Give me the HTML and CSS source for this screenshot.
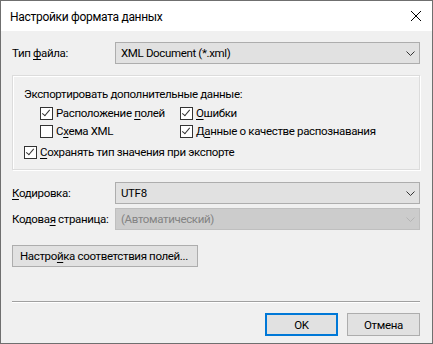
FILE: index.html
```html
<!DOCTYPE html>
<html lang="ru">
<head>
<meta charset="utf-8">
<title>Настройки формата данных</title>
<link rel="stylesheet" href="styles.css">
</head>
<body>
<div class="window">
  <div class="titlebar">
    <span class="title">Настройки формата данных</span>
    <svg class="close" width="12" height="12" viewBox="0 0 12 12"><path d="M1 1 L11 11 M11 1 L1 11" stroke="#000" stroke-width="1" fill="none"/></svg>
  </div>
  <div class="content">
    <div class="field">
      <span class="label">Тип <u>ф</u>айла:</span>
      <div class="select"><span>XML Document (*.xml)</span><svg class="chev" width="9" height="5" viewBox="0 0 9 5"><path d="M0.5 0.5 L4.5 4.5 L8.5 0.5" stroke="#333" fill="none"/></svg></div>
    </div>
    <div class="group">
      <div class="group-title">Экспортировать дополнительные данные:</div>
      <div class="grid">
        <label class="check"><span class="box on"></span><span>Расположение <u>п</u>олей</span></label>
        <label class="check"><span class="box on"></span><span><u>О</u>шибки</span></label>
        <label class="check"><span class="box"></span><span>С<u>х</u>ема XML</span></label>
        <label class="check"><span class="box on"></span><span>Д<u>а</u>нные о качестве распознавания</span></label>
      </div>
      <label class="check keep"><span class="box on"></span><span><u>С</u>охранять тип значения при экспорте</span></label>
    </div>
    <div class="field enc">
      <span class="label"><u>К</u>одировка:</span>
      <div class="select"><span>UTF8</span><svg class="chev" width="9" height="5" viewBox="0 0 9 5"><path d="M0.5 0.5 L4.5 4.5 L8.5 0.5" stroke="#333" fill="none"/></svg></div>
    </div>
    <div class="field page">
      <span class="label">Кодова<u>я</u> страница:</span>
      <div class="select disabled"><span>(Автоматический)</span><svg class="chev" width="9" height="5" viewBox="0 0 9 5"><path d="M0.5 0.5 L4.5 4.5 L8.5 0.5" stroke="#b4b4b4" fill="none"/></svg></div>
    </div>
    <div class="mapping"><button class="btn wide">Настро<u>й</u>ка соответствия полей...</button></div>
    <div class="sep"></div>
    <div class="actions">
      <button class="btn default">OK</button>
      <button class="btn">Отмена</button>
    </div>
  </div>
</div>
</body>
</html>
```
FILE: styles.css
```css
* { box-sizing: border-box; }
html, body { margin: 0; padding: 0; background: #f0f0f0; }
body { font-family: Roboto, "Noto Sans", sans-serif; font-size: 11.5px; letter-spacing: -0.35px; color: #000; white-space: nowrap; }
u { text-decoration: underline; text-underline-offset: 2px; }
.window { width: 433px; height: 344px; border: 1px solid #6f6f6f; background: #f0f0f0; display: flex; flex-direction: column; }
.titlebar { height: 30px; flex: none; background: #fff; display: flex; align-items: center; justify-content: space-between; padding: 0 10px 0 9px; }
.title { font-size: 12px; letter-spacing: -0.3px; position: relative; top: 1px; }
.close { display: block; }
.content { padding: 11px 12px 0 11px; display: flex; flex-direction: column; flex: 1; }
.field { display: flex; align-items: center; height: 22px; }
.label { width: 103px; flex: none; }
.select { flex: 1; height: 22px; background: #e1e1e1; border: 1px solid #adadad; display: flex; align-items: center; justify-content: space-between; padding: 0 4px 0 5px; }
.select.disabled { background: #cccccc; border-color: #bfbfbf; color: #838383; }
.chev { display: block; }
.group { margin-top: 11px; height: 95px; border: 1px solid #dcdcdc; box-shadow: inset 1px 1px 0 #fff, 1px 1px 0 #fff; padding: 10px 0 0 11px; }
.group-title { line-height: 16px; }
.grid { display: grid; grid-template-columns: 140px auto; row-gap: 2px; margin: 3px 0 0 16px; }
.check { display: flex; align-items: center; height: 16px; gap: 3px; }
.box { width: 13px; height: 13px; border: 1px solid #333; background: #fff; flex: none; position: relative; }
.box.on::after { content: ""; position: absolute; left: 3px; top: 0px; width: 3px; height: 7px; border-right: 1.2px solid #333; border-bottom: 1.2px solid #333; transform: rotate(40deg); }
.keep { margin-top: 5px; }
.enc { margin-top: 12px; }
.page { margin-top: 4px; }
.mapping { margin-top: 15px; }
.btn { font-family: inherit; font-size: 11.5px; letter-spacing: -0.35px; color: #000; background: #e1e1e1; border: 1px solid #adadad; height: 22px; padding: 0; margin: 0; }
.btn.wide { width: 186px; text-align: left; padding-left: 7px; }
.sep { margin-top: 34px; height: 2px; border-top: 1px solid #a0a0a0; border-bottom: 1px solid #fff; }
.actions { display: flex; justify-content: flex-end; gap: 9px; margin-top: 10px; }
.actions .btn { width: 73px; height: 23px; }
.btn.default { border: 2px solid #0078d7; }
```
